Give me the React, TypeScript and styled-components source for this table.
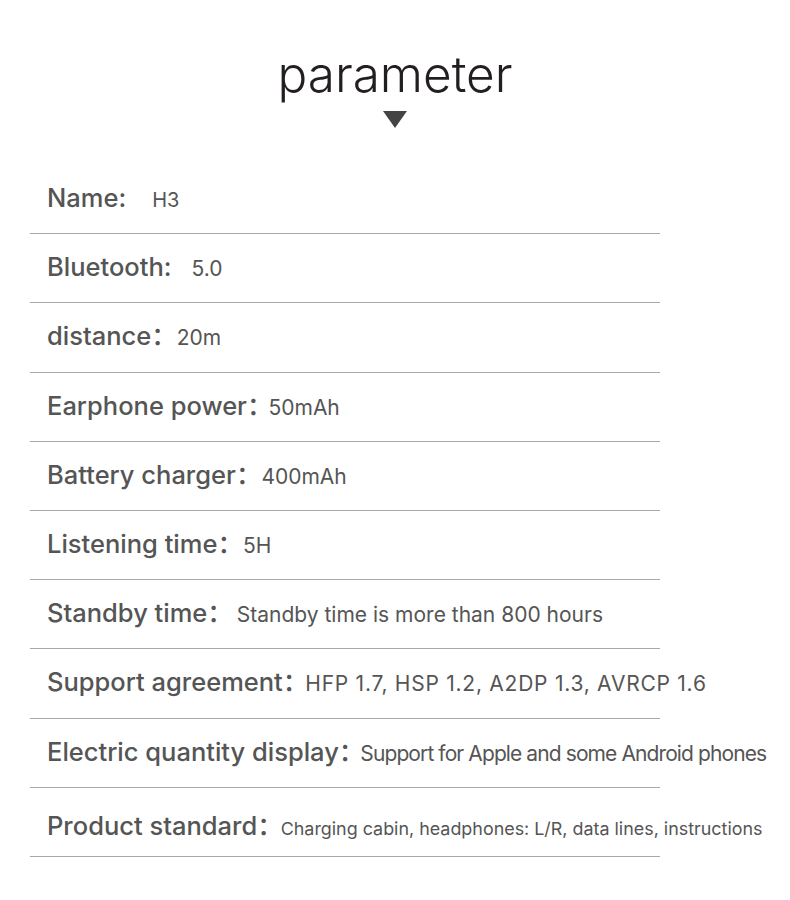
import React from 'react';
import styled, { createGlobalStyle } from 'styled-components';

const GlobalStyle = createGlobalStyle`
  html, body {
    margin: 0;
    padding: 0;
    background: #ffffff;
  }
  body {
    font-family: Inter, "Noto Sans CJK SC", "Liberation Sans", sans-serif;
  }
`;

interface Param {
  label: string;
  value: string;
  gap?: number;
  size?: number;
  spacing?: number;
}

const params: Param[] = [
  { label: 'Name:', value: 'H3', gap: 26, size: 20 },
  { label: 'Bluetooth:', value: '5.0', gap: 20 },
  { label: 'distance：', value: '20m' },
  { label: 'Earphone power：', value: '50mAh', gap: -4 },
  { label: 'Battery charger：', value: '400mAh' },
  { label: 'Listening time：', value: '5H' },
  { label: 'Standby time：', value: 'Standby time is more than 800 hours', gap: 4 },
  { label: 'Support agreement：', value: 'HFP 1.7, HSP 1.2, A2DP 1.3, AVRCP 1.6', gap: -3, spacing: 0.75 },
  { label: 'Electric quantity display：', value: 'Support for Apple and some Android phones', gap: -4, spacing: -0.9 },
  { label: 'Product standard：', value: 'Charging cabin, headphones: L/R, data lines, instructions', gap: -2, size: 17.9 },
];

export default function App() {
  return (
    <>
      <GlobalStyle />
      <Page>
        <Heading>
          <Title>parameter</Title>
          <Arrow />
        </Heading>
        <List>
          {params.map((p, i) => (
            <Row key={p.label} $last={i === params.length - 1}>
              <Line>
                <Label>{p.label}</Label>
                <Value $gap={p.gap ?? 0} $size={p.size ?? 21} $spacing={p.spacing ?? 0}>
                  {p.value}
                </Value>
              </Line>
            </Row>
          ))}
        </List>
      </Page>
    </>
  );
}

const Page = styled.div`
  width: 790px;
  height: 900px;
  background: #fff;
  padding-top: 46px;
  box-sizing: border-box;
`;

const Heading = styled.div`
  display: flex;
  flex-direction: column;
  align-items: center;
`;

const Title = styled.h1`
  margin: 0;
  font-size: 49.5px;
  font-weight: 300;
  line-height: 56px;
  color: #231f20;
`;

const Arrow = styled.div`
  width: 0;
  height: 0;
  margin-top: 9px;
  border-left: 12px solid transparent;
  border-right: 12px solid transparent;
  border-top: 17px solid #444;
`;

const List = styled.div`
  margin-top: 37px;
  width: 630px;
  margin-left: 30px;
`;

const Row = styled.div<{ $last?: boolean }>`
  display: flex;
  align-items: center;
  height: 69.2px;
  padding-left: 17px;
  padding-top: ${(p) => (p.$last ? '12px' : '0')};
  box-sizing: border-box;
  border-bottom: 1px solid #a8a8a8;
  white-space: nowrap;
`;

const Line = styled.div`
  display: flex;
  align-items: baseline;
  line-height: 30px;
`;

const Label = styled.span`
  font-size: 25.5px;
  font-weight: 500;
  color: #555;
`;

const Value = styled.span<{ $gap: number; $size: number; $spacing: number }>`
  margin-left: ${(p) => p.$gap}px;
  font-size: ${(p) => p.$size}px;
  letter-spacing: ${(p) => p.$spacing}px;
  color: #555;
`;
